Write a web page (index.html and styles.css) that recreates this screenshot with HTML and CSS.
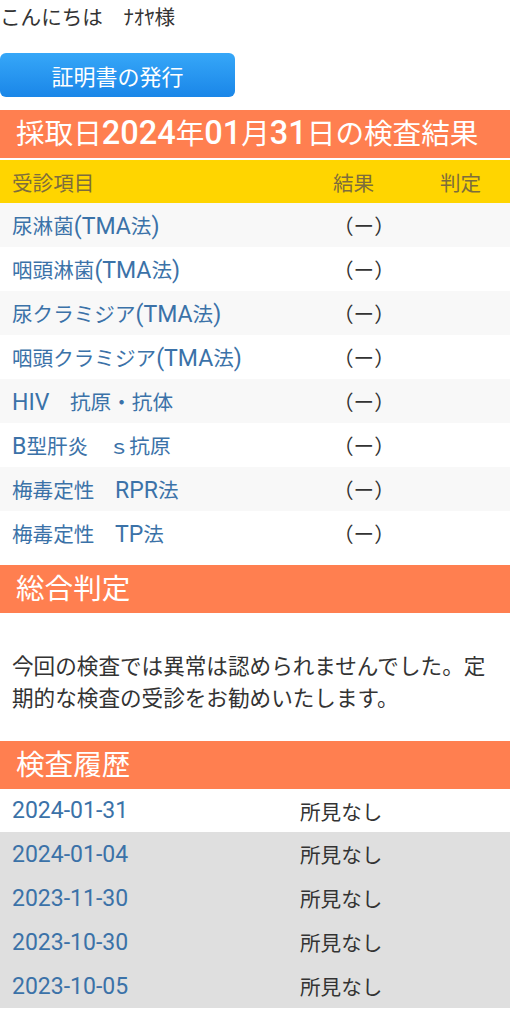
FILE: index.html
```html
<!DOCTYPE html>
<html lang="ja">
<head>
    <meta charset="UTF-8">
    <meta name="viewport" content="width=device-width, initial-scale=1.0">
    <title>検査結果</title>
    <link rel="stylesheet" href="styles.css">
</head>
<body>

    <div class="greeting">こんにちは　ﾅｵﾔ様</div>
    <a class="cert-button" href="#">証明書の発行</a>

    <!-- 今回の結果 -->
    <h2 class="section-title result-title">採取日<span class="en">2024</span>年<span class="en">01</span>月<span class="en">31</span>日の検査結果</h2>
    <table class="result-table">
        <colgroup>
            <col class="col-item">
            <col class="col-result">
            <col class="col-judge">
        </colgroup>
        <thead>
            <tr>
                <th>受診項目</th>
                <th>結果</th>
                <th>判定</th>
            </tr>
        </thead>
        <tbody>
            <tr><td>尿淋菌<span class="en">(TMA</span>法<span class="en">)</span></td><td>（ー）</td><td></td></tr>
            <tr><td>咽頭淋菌<span class="en">(TMA</span>法<span class="en">)</span></td><td>（ー）</td><td></td></tr>
            <tr><td>尿クラミジア<span class="en">(TMA</span>法<span class="en">)</span></td><td>（ー）</td><td></td></tr>
            <tr><td>咽頭クラミジア<span class="en">(TMA</span>法<span class="en">)</span></td><td>（ー）</td><td></td></tr>
            <tr><td><span class="en">HIV</span>　抗原・抗体</td><td>（ー）</td><td></td></tr>
            <tr><td><span class="en">B</span>型肝炎　ｓ抗原</td><td>（ー）</td><td></td></tr>
            <tr><td>梅毒定性　<span class="en">RPR</span>法</td><td>（ー）</td><td></td></tr>
            <tr><td>梅毒定性　<span class="en">TP</span>法</td><td>（ー）</td><td></td></tr>
        </tbody>
    </table>

    <h2 class="section-title summary-title">総合判定</h2>
    <p class="summary-text">今回の検査では異常は認められませんでした。定期的な検査の受診をお勧めいたします。</p>

    <!-- 履歴 -->
    <h2 class="section-title">検査履歴</h2>
    <div class="history">
        <div class="history-row"><a href="#">2024-01-31</a><span>所見なし</span></div>
        <div class="history-row"><a href="#">2024-01-04</a><span>所見なし</span></div>
        <div class="history-row"><a href="#">2023-11-30</a><span>所見なし</span></div>
        <div class="history-row"><a href="#">2023-10-30</a><span>所見なし</span></div>
        <div class="history-row"><a href="#">2023-10-05</a><span>所見なし</span></div>
    </div>

</body>
</html>
```

FILE: styles.css
```css
body {
    margin: 0;
    font-family: 'Roboto', 'Noto Sans CJK JP', sans-serif;
    font-size: 20.6px;
    color: #333;
}

/* latin glyphs come out a bit larger than the japanese ones */
.en {
    font-size: 1.12em;
    line-height: 1;
}

.greeting {
    height: 40px;
    line-height: 36px;
}

.cert-button {
    display: flex;
    align-items: center;
    justify-content: center;
    width: 235px;
    height: 44px;
    margin-top: 13px;
    border-radius: 6px;
    background: linear-gradient(#36a7f8, #1a86e8);
    color: #fff;
    font-size: 22px;
    text-decoration: none;
}

.section-title {
    margin: 0;
    height: 48px;
    line-height: 48px;
    padding-left: 16px;
    overflow: hidden;
    background-color: #ff7f50; /* coral */
    color: #fff;
    font-size: 28.6px;
    font-weight: normal;
}

.result-title {
    margin-top: 13px;
    margin-bottom: 2px;
}

.result-title .en {
    font-size: 32.5px;
    font-weight: 500;
}

.result-table {
    width: 100%;
    border-collapse: collapse;
    table-layout: fixed;
}

.col-item {
    width: 333px;
}

.col-result {
    width: 107px;
}

.result-table th {
    height: 43px;
    padding: 0;
    background-color: #ffd500;
    color: #7d6d3c;
    font-weight: normal;
    text-align: left;
}

.result-table td {
    height: 44px;
    padding: 0;
}

.result-table th:first-child,
.result-table td:first-child {
    padding-left: 12px;
    color: #3b72a8;
}

.result-table th:first-child {
    color: #7d6d3c;
}

.result-table tbody tr:nth-child(odd) {
    background-color: #f8f8f8;
}

.summary-title {
    margin-top: 10px;
}

.summary-text {
    margin: 0;
    padding: 38px 12px 26px;
    font-size: 21.6px;
    line-height: 32px;
}

.history-row {
    display: grid;
    grid-template-columns: 288px 1fr;
    align-items: center;
    height: 44px;
    padding-left: 12px;
    background-color: #dfdfdf;
}

.history-row:first-child {
    height: 43px;
    background-color: #fff;
}

.history-row a {
    font-size: 23px;
    color: #3b72a8;
    text-decoration: none;
}
```
